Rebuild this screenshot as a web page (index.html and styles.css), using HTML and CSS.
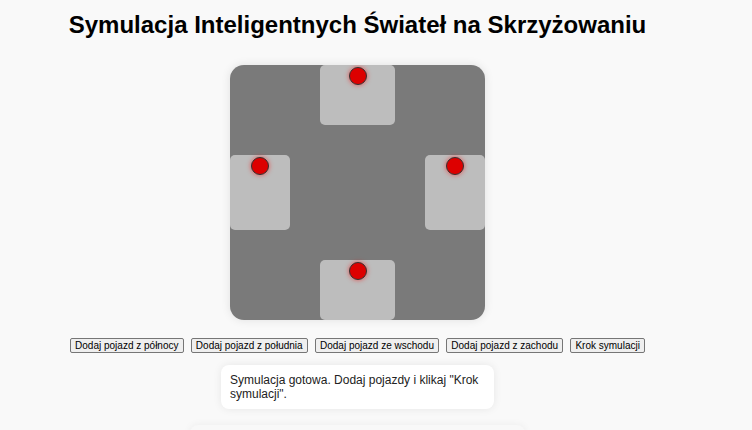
FILE: index.html
```html
<!DOCTYPE html>
<html lang="pl">
<head>
<meta charset="utf-8">
<title>Symulacja Inteligentnych Świateł na Skrzyżowaniu</title>
<link rel="stylesheet" href="styles.css">
</head>
<body>
<div class="page">
  <h1 class="title">Symulacja Inteligentnych Świateł na Skrzyżowaniu</h1>
  <div class="intersection">
    <div class="lane lane-north"><span class="light"></span></div>
    <div class="lane lane-west"><span class="light"></span></div>
    <div class="lane lane-east"><span class="light"></span></div>
    <div class="lane lane-south"><span class="light"></span></div>
  </div>
  <div class="controls">
    <button class="btn">Dodaj pojazd z północy</button>
    <button class="btn">Dodaj pojazd z południa</button>
    <button class="btn">Dodaj pojazd ze wschodu</button>
    <button class="btn">Dodaj pojazd z zachodu</button>
    <button class="btn">Krok symulacji</button>
  </div>
  <div class="status">Symulacja gotowa. Dodaj pojazdy i klikaj "Krok symulacji".</div>
  <div class="log"></div>
</div>
</body>
</html>
```

FILE: styles.css
```css
html, body {
  margin: 0;
  padding: 0;
  background: #f9f9f9;
  font-family: "Liberation Sans", Arial, sans-serif;
  overflow: hidden;
}

.page {
  width: 715px;
  padding-top: 11px;
  display: flex;
  flex-direction: column;
  align-items: center;
}

.title {
  margin: 0;
  font-size: 24px;
  line-height: 28px;
  font-weight: bold;
  color: #000;
}

.intersection {
  margin-top: 26px;
  width: 255px;
  height: 255px;
  background: #7a7a7a;
  border-radius: 14px;
  box-shadow: 0 0 10px rgba(0, 0, 0, 0.1);
  display: grid;
  grid-template-columns: 60px 30px 75px 30px 60px;
  grid-template-rows: 60px 30px 75px 30px 60px;
  overflow: hidden;
}

.lane {
  background: #bdbdbd;
  border-radius: 5px;
  display: flex;
  justify-content: center;
  align-items: flex-start;
  padding-top: 2px;
}

.lane-north { grid-column: 3; grid-row: 1; }
.lane-west  { grid-column: 1; grid-row: 3; }
.lane-east  { grid-column: 5; grid-row: 3; }
.lane-south { grid-column: 3; grid-row: 5; }

.light {
  width: 16px;
  height: 16px;
  border-radius: 50%;
  background: #dd0000;
  border: 1px solid #333;
  box-shadow: 0 0 5px rgba(255, 0, 0, 0.6);
}

.controls {
  margin-top: 18px;
  display: flex;
  gap: 7px;
}

.btn {
  font-family: "Liberation Sans", Arial, sans-serif;
  font-size: 10px;
  line-height: 11px;
  padding: 1px 4.2px;
  margin: 0;
  background: #efefef;
  border: 1px solid #767676;
  border-radius: 2px;
  color: #000;
}

.status {
  margin-top: 12px;
  width: 273px;
  box-sizing: border-box;
  padding: 8px 9px;
  background: #fff;
  border-radius: 8px;
  box-shadow: 0 0 8px rgba(0, 0, 0, 0.08);
  font-size: 12px;
  line-height: 14px;
  color: #222;
}

.log {
  margin-top: 16px;
  width: 335px;
  height: 60px;
  background: #f8f8f8;
  border-radius: 8px;
  box-shadow: 0 0 8px rgba(0, 0, 0, 0.06);
}
```
